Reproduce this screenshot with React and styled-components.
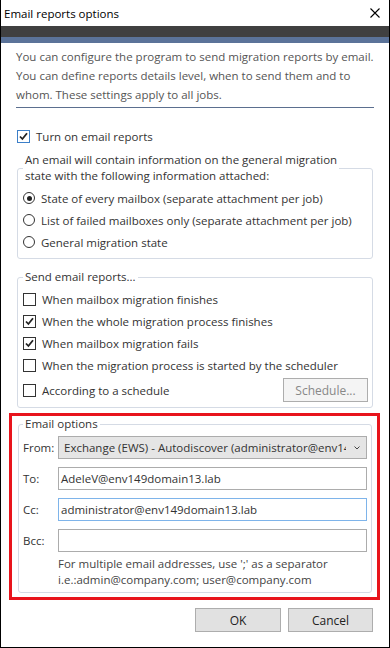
import styled, { createGlobalStyle } from 'styled-components';

const Global = createGlobalStyle`
  html, body { margin: 0; padding: 0; background: #fff; }
  body { font-family: "Segoe UI", "Open Sans", "Noto Sans", sans-serif; }
`;

const Window = styled.div`
  width: 390px;
  height: 648px;
  box-sizing: border-box;
  border: 1px solid #000;
  border-top: none;
  font-size: 11.5px;
  color: #333;
  overflow: hidden;
`;

const TitleBar = styled.div`
  height: 26px;
  display: flex;
  align-items: center;
  justify-content: space-between;
  padding: 0 9px 0 3px;
  font-size: 11.5px;
  color: #000;
`;

const CloseIcon = styled.svg`
  width: 10px;
  height: 10px;
`;

const DarkBar = styled.div`
  height: 11px;
  background: #404040;
`;

const BlueBar = styled.div`
  height: 6px;
  background: #5b7399;
`;

const Body = styled.div`
  padding: 4px 15px 0 15px;
`;

const Intro = styled.p`
  margin: 0;
  line-height: 19px;
  color: #555;
  padding-bottom: 3px;
  border-bottom: 1px solid #5b6f8f;
`;

const Row = styled.label`
  display: flex;
  align-items: center;
  gap: 6px;
  height: ${p => p.$h || 22}px;
  color: #333;
`;

const Box = styled.span`
  width: 11px;
  height: 11px;
  border: 1px solid ${p => (p.$focus ? '#3c7fc8' : '#333')};
  background: #fff;
  display: flex;
  align-items: center;
  justify-content: center;
  flex-shrink: 0;
`;

const Radio = styled.span`
  width: 10px;
  height: 10px;
  border: 1px solid #333;
  border-radius: 50%;
  display: flex;
  align-items: center;
  justify-content: center;
  flex-shrink: 0;
  &::after {
    content: '';
    width: 5px;
    height: 5px;
    border-radius: 50%;
    background: ${p => (p.$on ? '#222' : 'transparent')};
  }
`;

const Group = styled.fieldset`
  margin: ${p => p.$mt || 0}px 1px 0 1px;
  padding: ${p => p.$pt || 0}px 4px ${p => p.$pb || 4}px ${p => p.$pl || 5}px;
  border: 1px solid #d5dbe5;
  border-radius: 3px;
  min-width: 0;
`;

const Legend = styled.legend`
  padding: 0 2px;
  margin-left: 0;
  line-height: 16px;
  color: #333;
`;

const Check = ({ checked, focus }) => (
  <Box $focus={focus}>
    {checked && (
      <svg width="9" height="9" viewBox="0 0 9 9">
        <path d="M1 4.5 L3.4 7 L8 1.2" fill="none" stroke="#222" strokeWidth="1.8" />
      </svg>
    )}
  </Box>
);

const ScheduleRow = styled.div`
  display: flex;
  align-items: center;
  justify-content: space-between;
  height: 28px;
`;

const Button = styled.button`
  font: inherit;
  font-size: 12px;
  width: ${p => p.$w || 85}px;
  height: 24px;
  background: ${p => (p.$disabled ? '#f4f4f4' : '#e1e1e1')};
  border: 1px solid #adadad;
  color: ${p => (p.$disabled ? '#888' : '#222')};
  padding: 0;
`;

const Highlight = styled.div`
  margin: 5px -6px 0 -7px;
  border: 3px solid #e8141c;
  padding: 0 4px 4px 5px;
`;

const FieldRow = styled.div`
  display: grid;
  grid-template-columns: 35px minmax(0, 1fr);
  align-items: center;
  height: 31px;
`;

const FieldLabel = styled.span`
  color: #333;
`;

const Select = styled.div`
  height: 23px;
  box-sizing: border-box;
  border: 1px solid #acacac;
  background: #e5e5e5;
  display: flex;
  align-items: center;
  padding: 0 6px 0 5px;
  font-size: 11.5px;
  color: #333;
  gap: 8px;
  min-width: 0;
`;

const SelectText = styled.span`
  flex: 1;
  min-width: 0;
  white-space: nowrap;
  overflow: hidden;
`;

const Input = styled.div`
  height: 23px;
  box-sizing: border-box;
  border: 1px solid ${p => (p.$focus ? '#7eb4ea' : '#acacac')};
  background: #fff;
  display: flex;
  align-items: center;
  padding: 0 2px;
  font-size: 11.5px;
  color: #333;
`;

const Hint = styled.div`
  padding-left: 35px;
  line-height: 16px;
  color: #444;
`;

const Footer = styled.div`
  display: flex;
  justify-content: flex-end;
  gap: 7px;
  padding: 8px 1px 0 0;
`;

export default function App() {
  return (
    <Window>
      <Global />
      <TitleBar>
        <span>Email reports options</span>
        <CloseIcon viewBox="0 0 10 10">
          <path d="M0.5 0.5 L9.5 9.5 M9.5 0.5 L0.5 9.5" stroke="#000" strokeWidth="1.1" />
        </CloseIcon>
      </TitleBar>
      <DarkBar />
      <BlueBar />
      <Body>
        <Intro>
          You can configure the program to send migration reports by email. You can define reports
          details level, when to send them and to whom. These settings apply to all jobs.
        </Intro>
        <Row $h={24} style={{ marginTop: 16, paddingLeft: 1 }}>
          <Check checked focus />
          <span>Turn on email reports</span>
        </Row>
        <Group $mt={4} $pt={3} $pb={5}>
          <Legend>
            An email will contain information on the general migration
            <br />
            state with the following information attached:
          </Legend>
          <Row>
            <Radio $on />
            <span>State of every mailbox (separate attachment per job)</span>
          </Row>
          <Row>
            <Radio />
            <span>List of failed mailboxes only (separate attachment per job)</span>
          </Row>
          <Row>
            <Radio />
            <span>General migration state</span>
          </Row>
        </Group>
        <Group $mt={10} $pt={3} $pb={3}>
          <Legend>Send email reports...</Legend>
          <Row>
            <Check />
            <span>When mailbox migration finishes</span>
          </Row>
          <Row>
            <Check checked />
            <span>When the whole migration process finishes</span>
          </Row>
          <Row>
            <Check checked />
            <span>When mailbox migration fails</span>
          </Row>
          <Row>
            <Check />
            <span>When the migration process is started by the scheduler</span>
          </Row>
          <ScheduleRow>
            <Row $h={28}>
              <Check />
              <span>According to a schedule</span>
            </Row>
            <Button $disabled $w={85}>Schedule...</Button>
          </ScheduleRow>
        </Group>
        <Highlight>
          <Group $pl={4} $pb={4}>
            <Legend>Email options</Legend>
            <FieldRow>
              <FieldLabel>From:</FieldLabel>
              <Select>
                <SelectText>Exchange (EWS) - Autodiscover (administrator@env149domain13.lab)</SelectText>
                <svg width="6" height="4" viewBox="0 0 6 4">
                  <path d="M0.5 0.5 L3 3 L5.5 0.5" fill="none" stroke="#444" strokeWidth="1" />
                </svg>
              </Select>
            </FieldRow>
            <FieldRow>
              <FieldLabel>To:</FieldLabel>
              <Input>AdeleV@env149domain13.lab</Input>
            </FieldRow>
            <FieldRow>
              <FieldLabel>Cc:</FieldLabel>
              <Input $focus>administrator@env149domain13.lab</Input>
            </FieldRow>
            <FieldRow>
              <FieldLabel>Bcc:</FieldLabel>
              <Input />
            </FieldRow>
            <Hint>
              For multiple email addresses, use ';' as a separator
              <br />
              i.e.:admin@company.com; user@company.com
            </Hint>
          </Group>
        </Highlight>
        <Footer>
          <Button $w={86}>OK</Button>
          <Button>Cancel</Button>
        </Footer>
      </Body>
    </Window>
  );
}
